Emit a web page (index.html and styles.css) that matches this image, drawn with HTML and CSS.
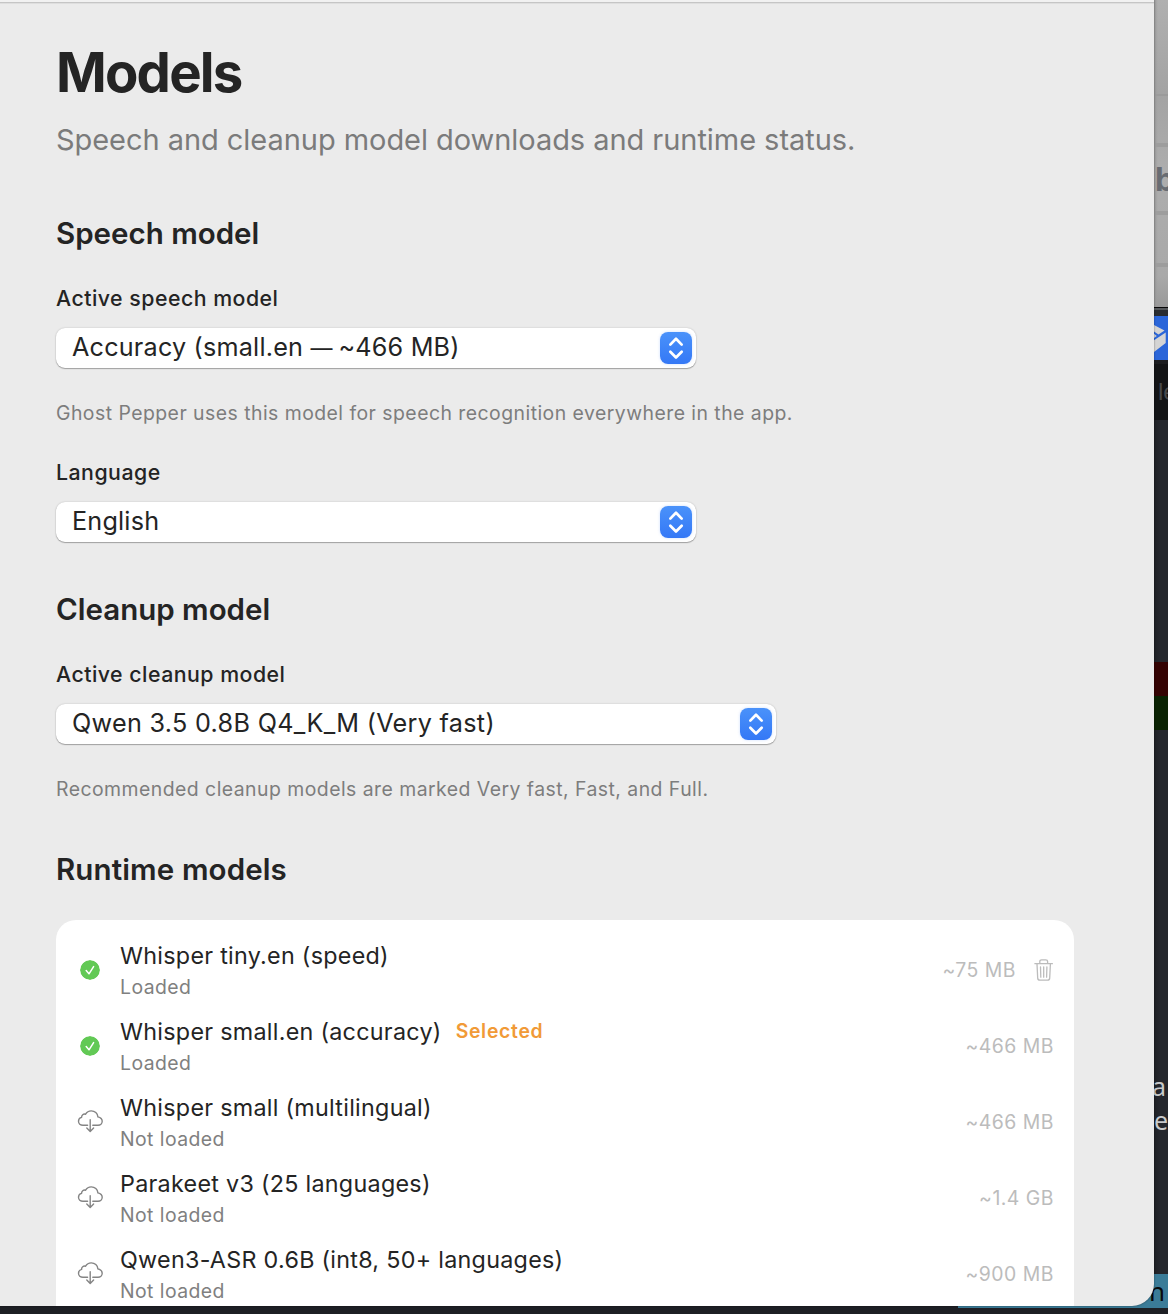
FILE: index.html
```html
<!DOCTYPE html>
<html lang="en">
<head>
<meta charset="utf-8">
<title>Models</title>
<link rel="stylesheet" href="styles.css">
</head>
<body>
<svg width="0" height="0" class="sprite">
  <symbol id="updown" viewBox="0 0 32 32"><path d="M10.3 12.6 16 6.8l5.700 5.800M10.300 19.700 16 25.500l5.700-5.800" fill="none" stroke="#fff" stroke-width="2.700" stroke-linecap="round" stroke-linejoin="round"/></symbol>
  <symbol id="check" viewBox="0 0 20 20"><circle cx="10" cy="10" r="10" fill="#62c955"/><path d="M6.200 10.600 9 13.800l4.600-7.200" fill="none" stroke="#fff" stroke-width="1.500" stroke-linecap="round" stroke-linejoin="round"/></symbol>
  <symbol id="cloud" viewBox="0 0 27 24"><path d="M10.600 16.300H6c-2.600 0-4.500-1.700-4.500-4 0-2 1.400-3.500 3.100-3.900-.2-2.200 1.800-3.800 4-3.200 1.200-2.200 3.400-3.300 5.700-3.300 3.500 0 6.400 2.500 6.600 6 2.400.6 4.300 2.100 4.300 4.400s-1.900 4-4.200 4h-5.200M13.200 10.800v11.400M9.800 19.100l3.400 3.300 3.400-3.300" fill="none" stroke="#848484" stroke-width="1.400" stroke-linecap="round" stroke-linejoin="round"/></symbol>
  <symbol id="trash" viewBox="0 0 20 24"><path d="M.9 5.700h17.500M5.800 5.500V3.600c0-1.100.7-1.800 1.800-1.800h4.200c1.100 0 1.800.7 1.800 1.800v1.900M3 5.900l.7 14.200c.1 1.300.8 2 2.100 2h7.800c1.300 0 2-.7 2.100-2l.7-14.200M6.500 9l.3 10.200M9.700 9v10.200M12.900 9l-.3 10.200" fill="none" stroke="#bcbcbc" stroke-width="1.300" stroke-linecap="round"/></symbol>
</svg>

<div class="desktop">
  <div class="page-behind"><span class="page-letter">b</span></div>
  <div class="tabs-behind"></div>
  <div class="app-behind"><svg width="14" height="44" viewBox="0 0 14 44"><path d="M0 9 10.500 14.500 4.500 18.500 0 15.500ZM0 17.800 2.800 20 0 22ZM0 24.200 11.700 16.500V27L0 36Z" fill="#d4d4d4"/></svg></div>
  <div class="bar-behind">le</div>
  <div class="editor-behind">
    <div class="diff-removed"></div>
    <div class="diff-added"></div>
    <div class="code-behind">a<br>e</div>
  </div>
  <div class="status-behind"><span>n</span></div>
</div>

<main class="window">
  <div class="titlebar"></div>
  <div class="content">
    <h1>Models</h1>
    <p class="subtitle">Speech and cleanup model downloads and runtime status.</p>

    <section class="speech">
      <h2>Speech model</h2>
      <h3>Active speech model</h3>
      <div class="select"><span>Accuracy (small.en <i class="dash">—</i> ~466 MB)</span><svg class="stepper"><use href="#updown"/></svg></div>
      <p class="help">Ghost Pepper uses this model for speech recognition everywhere in the app.</p>
      <h3>Language</h3>
      <div class="select"><span>English</span><svg class="stepper"><use href="#updown"/></svg></div>
    </section>

    <section class="cleanup">
      <h2>Cleanup model</h2>
      <h3>Active cleanup model</h3>
      <div class="select wide"><span>Qwen 3.5 0.8B Q4_K_M (Very fast)</span><svg class="stepper"><use href="#updown"/></svg></div>
      <p class="help">Recommended cleanup models are marked Very fast, Fast, and Full.</p>
    </section>

    <section class="runtime">
      <h2>Runtime models</h2>
      <div class="card">
        <div class="row"><svg class="check"><use href="#check"/></svg><div class="info"><div class="name">Whisper tiny.en (speed)</div><div class="state">Loaded</div></div><span class="size">~75 MB</span><svg class="trash"><use href="#trash"/></svg></div>
        <div class="row"><svg class="check"><use href="#check"/></svg><div class="info"><div class="name"><span>Whisper small.en (accuracy)</span><b>Selected</b></div><div class="state">Loaded</div></div><span class="size">~466 MB</span></div>
        <div class="row"><svg class="cloud"><use href="#cloud"/></svg><div class="info"><div class="name">Whisper small (multilingual)</div><div class="state">Not loaded</div></div><span class="size">~466 MB</span></div>
        <div class="row"><svg class="cloud"><use href="#cloud"/></svg><div class="info"><div class="name">Parakeet v3 (25 languages)</div><div class="state">Not loaded</div></div><span class="size">~1.4 GB</span></div>
        <div class="row"><svg class="cloud"><use href="#cloud"/></svg><div class="info"><div class="name">Qwen3-ASR 0.6B (int8, 50+ languages)</div><div class="state">Not loaded</div></div><span class="size">~900 MB</span></div>
      </div>
    </section>
  </div>
</main>
</body>
</html>
```
FILE: styles.css
```css
* { box-sizing: border-box; }
body {
  margin: 0;
  width: 1168px;
  height: 1314px;
  position: relative;
  overflow: hidden;
  background: #1d1f24;
  color: #242424;
  font-family: Inter, "Liberation Sans", sans-serif;
}
h1, h2, h3, p { margin: 0; }
.sprite { position: absolute; }

/* Other windows visible past the right and bottom edges */
.desktop {
  position: absolute;
  inset: 0 0 0 958px;
  display: flex;
  flex-direction: column;
  align-items: flex-end;
}
.desktop > div { width: 14px; flex: none; overflow: hidden; }
.page-behind {
  height: 307px;
  padding: 160px 0 0 1px;
  background:
    linear-gradient(#9b9b9b, #9b9b9b) 0 94px / 100% 2px no-repeat,
    linear-gradient(#9d9d9d, #9d9d9d) 0 143px / 100% 4px no-repeat,
    linear-gradient(#9d9d9d, #9d9d9d) 0 211px / 100% 4px no-repeat,
    linear-gradient(#9d9d9d, #9d9d9d) 0 263px / 100% 4px no-repeat,
    linear-gradient(90deg, #9a9a9a, transparent 4px),
    linear-gradient(#b0b0b0, #a3a3a3 30%, #adadad 55%, #a9a9a9 90%, #999);
}
.page-letter { display: block; font: 700 32px/40px Inter, sans-serif; color: #686c72; }
.tabs-behind { height: 9px; background: linear-gradient(#070708 1px, #55585b 1px 3px, #292c30 3px); }
.app-behind { height: 44px; background: #2b66d9; }
.app-behind svg { display: block; }
.bar-behind {
  height: 60px;
  padding-left: 4px;
  border-top: 4px solid #1c1d20;
  background: #131416;
  color: #48494b;
  font: 24px/56px "Liberation Sans", sans-serif;
}
.editor-behind { height: 854px; background: linear-gradient(90deg, #1e2025, #25272d 6px); }
.diff-removed { height: 34px; margin-top: 242px; background: #340303; }
.diff-added { height: 34px; background: #0a2203; }
.code-behind {
  padding-top: 339px;
  text-indent: -2px;
  color: #c8c9ca;
  font: 25px/34px "Noto Sans", sans-serif;
}
.desktop > .status-behind {
  width: 210px;
  height: 34px;
  padding-right: 3px;
  background: #3b7c98;
  color: #080a0c;
  text-align: right;
  font: 26px/34px "Noto Sans", sans-serif;
}

.window {
  position: absolute;
  left: 0;
  top: 0;
  width: 1154px;
  height: 1306px;
  overflow: hidden;
  border-radius: 0 0 22px 0;
  background: #ebebeb;
  box-shadow: 0 0 2px rgba(0, 0, 0, .5);
}
.titlebar { height: 4px; background: linear-gradient(#f1f1f1 2px, #c5c5c5 2px 3px, #dedede 3px); }
.content { padding: 34px 80px 0 56px; }

h1 { font-size: 54.5px; line-height: 68px; font-weight: 700; letter-spacing: -1.8px; }
.subtitle { margin-top: 16px; font-size: 29px; line-height: 36px; letter-spacing: -.05px; color: #7b7b7b; }
h2 { font-size: 29.5px; line-height: 36px; font-weight: 600; }
h3 { margin-top: 33px; font-size: 21.3px; line-height: 28px; font-weight: 500; letter-spacing: .49px; }
.speech { margin-top: 57px; }
.cleanup { margin-top: 49px; }
.runtime { margin-top: 50px; }
.runtime h2 { letter-spacing: .12px; }
.select {
  display: flex;
  align-items: center;
  justify-content: space-between;
  width: 640px;
  height: 40px;
  margin: 16px 0 0;
  padding: 0 4px 0 16px;
  border-radius: 9px;
  background: #fff;
  box-shadow: 0 1px 1px rgba(0, 0, 0, .28), 0 0 2px rgba(0, 0, 0, .2);
  font-size: 25.2px;
  line-height: 38px;
  letter-spacing: .2px;
}
.select span { padding-bottom: 2px; }
.select.wide { width: 720px; letter-spacing: .3px; }
.dash { margin-right: -1.5px; font-style: normal; font-size: 22px; line-height: 1; }
.stepper {
  width: 32px;
  height: 32px;
  border-radius: 8px;
  background: linear-gradient(#4a92fa, #3478f6);
  box-shadow: 0 0 3px rgba(52, 120, 246, .25);
}
.help { margin-top: 33px; font-size: 19.4px; line-height: 24px; letter-spacing: .47px; color: #7d7d7d; }
.card {
  display: flex;
  flex-direction: column;
  gap: 12px;
  width: 1018px;
  margin-top: 33px;
  padding: 18px 20px;
  border-radius: 20px;
  background: #fff;
}
.row { display: flex; align-items: center; height: 64px; }
.row svg { flex: none; }
.check { width: 20px; height: 20px; margin: 0 20px 0 4px; border-radius: 50%; }
.cloud { width: 27px; height: 24px; margin: 0 16px 2px 1px; }
.info { flex: 1; }
.name { display: flex; align-items: center; gap: 14px; height: 32px; font-size: 23.3px; line-height: 32px; letter-spacing: .29px; }
.name b { margin-bottom: 2px; font-size: 19.4px; line-height: 28px; font-weight: 600; letter-spacing: .7px; color: #f19a37; }
.state { margin-top: 2px; font-size: 19.4px; line-height: 26px; letter-spacing: .43px; color: #808080; }
.size { font-size: 19.4px; line-height: 26px; letter-spacing: .5px; color: #bcbcbc; }
.trash { width: 20px; height: 24px; margin-left: 18px; }
```
